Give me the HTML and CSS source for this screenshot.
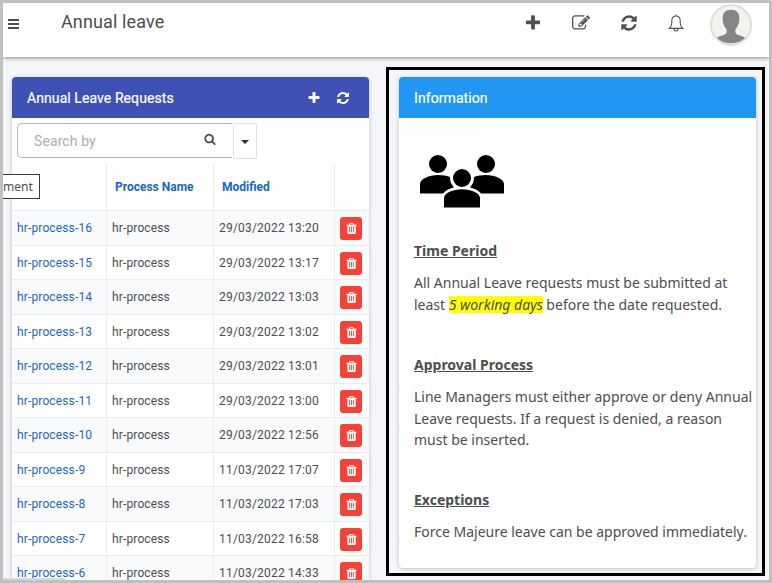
FILE: index.html
```html
<!DOCTYPE html>
<html lang="en">
<head>
<meta charset="utf-8">
<title>Annual leave</title>
<link rel="stylesheet" href="styles.css">
</head>
<body>
<svg class="defs" width="0" height="0">
  <symbol id="plus" viewBox="0 0 1792 1792"><path d="M1600 736v192q0 40-28 68t-68 28h-416v416q0 40-28 68t-68 28h-192q-40 0-68-28t-28-68v-416h-416q-40 0-68-28t-28-68v-192q0-40 28-68t68-28h416v-416q0-40 28-68t68-28h192q40 0 68 28t28 68v416h416q40 0 68 28t28 68z"/></symbol>
  <symbol id="refresh" viewBox="0 0 1792 1792"><path d="M1639 1056q0 5-1 7-64 268-268 434.5t-478 166.5q-146 0-282.5-55t-243.5-157l-129 129q-19 19-45 19t-45-19-19-45v-448q0-26 19-45t45-19h448q26 0 45 19t19 45-19 45l-137 137q71 66 161 102t187 36q134 0 250-65t186-179q11-17 53-117 8-23 30-23h192q13 0 22.5 9.500t9.500 22.500zm25-800v448q0 26-19 45t-45 19h-448q-26 0-45-19t-19-45 19-45l138-138q-148-137-349-137-134 0-250 65t-186 179q-11 17-53 117-8 23-30 23h-199q-13 0-22.500-9.500t-9.500-22.500v-7q65-268 270-434.500t480-166.500q146 0 284 55.500t245 156.500l130-129q19-19 45-19t45 19 19 45z"/></symbol>
  <symbol id="edit" viewBox="0 0 1792 1792"><path d="M888 1184l116-116-152-152-116 116v56h96v96h56zm440-720q-16-16-33 1l-350 350q-17 17-1 33t33-1l350-350q17-17 1-33zm80 594v190q0 119-84.500 203.500t-203.500 84.500h-832q-119 0-203.500-84.500t-84.500-203.500v-832q0-119 84.500-203.500t203.500-84.500h832q63 0 117 25 15 7 18 23 3 17-9 29l-49 49q-14 14-32 8-23-6-45-6h-832q-66 0-113 47t-47 113v832q0 66 47 113t113 47h832q66 0 113-47t47-113v-126q0-13 9-22l64-64q15-15 35-7t20 29zm-96-738l288 288-672 672h-288v-288zm444 132l-92 92-288-288 92-92q28-28 68-28t68 28l152 152q28 28 28 68t-28 68z"/></symbol>
  <symbol id="search" viewBox="0 0 1792 1792"><path d="M1216 832q0-185-131.500-316.500t-316.500-131.500-316.500 131.500-131.500 316.500 131.500 316.500 316.500 131.500 316.500-131.500 131.500-316.500zm512 832q0 52-38 90t-90 38q-54 0-90-38l-343-342q-179 124-399 124-143 0-273.500-55.500t-225-150-150-225-55.500-273.500 55.500-273.500 150-225 225-150 273.500-55.500 273.500 55.500 225 150 150 225 55.500 273.500q0 220-124 399l343 343q37 37 37 90z"/></symbol>
  <symbol id="trash" viewBox="0 0 1792 1792"><path d="M704 1376v-704q0-14-9-23t-23-9h-64q-14 0-23 9t-9 23v704q0 14 9 23t23 9h64q14 0 23-9t9-23zm256 0v-704q0-14-9-23t-23-9h-64q-14 0-23 9t-9 23v704q0 14 9 23t23 9h64q14 0 23-9t9-23zm256 0v-704q0-14-9-23t-23-9h-64q-14 0-23 9t-9 23v704q0 14 9 23t23 9h64q14 0 23-9t9-23zm-544-992h448l-48-117q-7-9-17-11h-317q-10 2-17 11zm928 32v64q0 14-9 23t-23 9h-96v948q0 83-47 143.500t-113 60.500h-832q-66 0-113-58.500t-47-141.500v-952h-96q-14 0-23-9t-9-23v-64q0-14 9-23t23-9h309l70-167q15-37 54-63t79-26h320q40 0 79 26t54 63l70 167h309q14 0 23 9t9 23z"/></symbol>
</svg>
<div class="app">
  <header class="topbar">
    <div class="menu"><i></i><i></i><i></i><i></i></div>
    <h1>Annual leave</h1>
    <nav class="actions">
      <svg class="action"><use href="#plus"/></svg>
      <svg class="action"><use href="#edit"/></svg>
      <svg class="action"><use href="#refresh"/></svg>
      <svg class="bell" viewBox="0 0 16 18"><path d="M8 .5v1.300M1.300 14.400h13.400c-1.700-1.600-2.500-3.300-2.500-5.400V6.500C12.200 3.700 10.500 2 8 2S3.800 3.700 3.800 6.500V9c0 2.100-.8 3.800-2.500 5.400zM6 14.600c0 3.200 4 3.200 4 0"/></svg>
    </nav>
    <svg class="avatar" viewBox="0 0 42 42">
      <circle cx="21" cy="21" r="20" fill="#f3f2ed" stroke="#dedede" stroke-width="2"/>
      <path fill="#858585" d="M21 5.700c5.500 0 8.500 3.400 8.400 8.500 0 4.800-1.500 8.500-4 11v3.300c.3 2.500 6.200 3 9.800 5.200C31.500 37.500 26.500 39.200 21 39.200S10.500 37.500 6.900 33.700c3.500-2.200 9.400-2.700 9.700-5.200v-3.300c-2.500-2.500-4-6.200-4-11 0-5.100 2.900-8.500 8.400-8.500z"/>
    </svg>
  </header>

  <main class="content">
    <section class="card requests">
      <div class="card-head">
        <h2>Annual Leave Requests</h2>
        <svg class="head-icon"><use href="#plus"/></svg>
        <svg class="head-icon"><use href="#refresh"/></svg>
      </div>
      <div class="search">
        <div class="field"><span>Search by</span><svg><use href="#search"/></svg></div>
        <div class="drop"><b></b></div>
      </div>
      <div class="row thead"><div></div><div>Process Name</div><div>Modified</div><div></div></div>
      <div class="row"><a>hr-process-16</a><div>hr-process</div><div>29/03/2022 13:20</div><div><span class="del"><svg><use href="#trash"/></svg></span></div></div>
      <div class="row"><a>hr-process-15</a><div>hr-process</div><div>29/03/2022 13:17</div><div><span class="del"><svg><use href="#trash"/></svg></span></div></div>
      <div class="row"><a>hr-process-14</a><div>hr-process</div><div>29/03/2022 13:03</div><div><span class="del"><svg><use href="#trash"/></svg></span></div></div>
      <div class="row"><a>hr-process-13</a><div>hr-process</div><div>29/03/2022 13:02</div><div><span class="del"><svg><use href="#trash"/></svg></span></div></div>
      <div class="row"><a>hr-process-12</a><div>hr-process</div><div>29/03/2022 13:01</div><div><span class="del"><svg><use href="#trash"/></svg></span></div></div>
      <div class="row"><a>hr-process-11</a><div>hr-process</div><div>29/03/2022 13:00</div><div><span class="del"><svg><use href="#trash"/></svg></span></div></div>
      <div class="row"><a>hr-process-10</a><div>hr-process</div><div>29/03/2022 12:56</div><div><span class="del"><svg><use href="#trash"/></svg></span></div></div>
      <div class="row"><a>hr-process-9</a><div>hr-process</div><div>11/03/2022 17:07</div><div><span class="del"><svg><use href="#trash"/></svg></span></div></div>
      <div class="row"><a>hr-process-8</a><div>hr-process</div><div>11/03/2022 17:03</div><div><span class="del"><svg><use href="#trash"/></svg></span></div></div>
      <div class="row"><a>hr-process-7</a><div>hr-process</div><div>11/03/2022 16:58</div><div><span class="del"><svg><use href="#trash"/></svg></span></div></div>
      <div class="row"><a>hr-process-6</a><div>hr-process</div><div>11/03/2022 14:33</div><div><span class="del"><svg><use href="#trash"/></svg></span></div></div>
    </section>

    <div class="frame">
      <section class="card info">
        <div class="card-head blue"><h2>Information</h2></div>
        <div class="info-body">
          <svg class="people" viewBox="0 0 84 53">
            <circle cx="18" cy="9" r="9"/><circle cx="66" cy="9" r="9"/>
            <path d="M0 38.500V29c0-5 9-9 18-9 4.500 0 9 .8 12.700 2.300L34 33l-10 5.500zM84 38.500V29c0-5-9-9-18-9-4.500 0-9 .8-12.700 2.300L50 33l10 5.500z"/>
            <circle cx="42" cy="23" r="12" fill="#fff"/>
            <path fill="#fff" d="M22 53V42c0-6 10-10.500 20-10.500S62 36 62 42v11z"/>
            <circle cx="42" cy="23" r="9"/>
            <path d="M24 52.500V43c0-5 9-8.700 18-8.700S60 38 60 43v9.500z"/>
          </svg>
          <h3 class="time">Time Period</h3>
          <p><span class="l1">All Annual Leave requests must be submitted at</span><br><span class="l2">least <em>5 working days</em> before the date requested.</span></p>
          <h3 class="approval">Approval Process</h3>
          <p><span class="l3">Line Managers must either approve or deny Annual</span><br><span class="l4">Leave requests. If a request is denied, a reason</span><br><span class="l5">must be inserted.</span></p>
          <h3 class="exceptions">Exceptions</h3>
          <p><span class="l6">Force Majeure leave can be approved immediately.</span></p>
        </div>
      </section>
    </div>
  </main>
  <div class="tip">ment</div>
  <div class="status"></div>
</div>
</body>
</html>
```
FILE: styles.css
```css
* { box-sizing: border-box; }
body { margin: 0; font-family: Roboto, "Liberation Sans", sans-serif; color: #4d4d4f; }
h1, h2, h3, p { margin: 0; font-weight: 400; }
svg { display: block; flex: none; }
.defs { position: absolute; }
.app {
  position: relative;
  width: 772px;
  height: 583px;
  overflow: hidden;
  border: 3px solid #c0c0c0;
  background: #f4f6fa;
}
.topbar {
  position: relative;
  display: flex;
  align-items: flex-start;
  height: 54px;
  background: #fff;
  box-shadow: 0 1px 4px rgba(0, 0, 0, .45);
}
.menu { display: flex; flex-direction: column; gap: 1px; width: 11px; margin: 16px 0 0 5px; }
.menu i { height: 2px; background: #505050; margin-bottom: 0; }
.menu { gap: 2px; }
.menu i:nth-child(4) { display: none; }
h1 { margin: 7px 0 0 42px; font-size: 18px; line-height: 24px; letter-spacing: .12px; white-space: nowrap; }
.actions { display: flex; align-items: center; gap: 30px; margin: 11px 26px 0 auto; fill: #505052; }
.action { width: 18px; height: 18px; }
.bell { width: 16px; height: 18px; fill: none; stroke: #505052; stroke-width: 1.100; }
.avatar { width: 42px; height: 42px; margin: 1px 17px 0 0; }

.content { display: flex; align-items: flex-start; }
.card { background: #fff; border-radius: 4px; box-shadow: 0 1px 4px rgba(0, 0, 0, .22); }
.requests { width: 357px; height: 530px; margin: 20px 17px 0 9px; }
.card-head {
  display: flex;
  align-items: center;
  height: 41px;
  padding: 0 19px 0 15px;
  background: #3f51b5;
  border-radius: 4px 4px 0 0;
  color: #fff;
}
.card-head h2 { flex: 1; font-size: 14px; line-height: 20px; letter-spacing: .08px; -webkit-text-stroke: .2px #fff; }
.head-icon { width: 14px; height: 14px; margin-left: 15px; fill: #fff; }
.blue { background: #2196f3; }

.search { display: flex; padding: 5px 5px 0; height: 46px; }
.field {
  display: flex;
  align-items: center;
  width: 215px;
  height: 35px;
  padding: 0 16px;
  border: 1px solid #b5b5b5;
  border-right: 0;
  border-radius: 5px 0 0 5px;
  font-size: 14px;
  color: #a9adb5;
}
.field span { flex: 1; letter-spacing: .1px; }
.field svg { width: 12px; height: 12px; margin-top: -3px; fill: #484848; }
.drop {
  display: flex;
  align-items: center;
  justify-content: center;
  width: 24px;
  height: 36px;
  margin-left: 1px;
  border: 1px solid #dbe3e6;
  border-radius: 2px;
}
.drop b { margin-top: 2px; border: 4px solid transparent; border-top-color: #303030; border-bottom: 0; }

.row {
  display: grid;
  grid-template-columns: 95px 107px 121px 34px;
  height: 34.500px;
  border-bottom: 1px solid #e9ecee;
  font-size: 12px;
  line-height: 34px;
}
.row:nth-child(even) { background: #f9fafb; }
.row > * { padding-left: 5px; border-right: 1px solid #e9ecee; white-space: nowrap; letter-spacing: .14px; }
.row > :last-child { border-right: 0; }
.row a { color: #1b66c4; }
.row > :nth-child(3) { letter-spacing: .2px; }
.row.thead { height: 47px; line-height: 46px; background: #fff; font-weight: 700; color: #1766c5; }
.row.thead > * { padding-left: 8px; letter-spacing: 0; }
.del {
  display: flex;
  align-items: center;
  justify-content: center;
  width: 22px;
  height: 23px;
  margin-top: 6px;
  border-radius: 3px;
  background: #f44336;
}
.del svg { width: 13px; height: 13px; fill: #fff; }

.frame { width: 379px; height: 509px; margin-top: 10px; padding: 7px 6px 0 10px; border: 3px solid #000; }
.info { width: 357px; height: 491px; }
.info-body { padding: 37px 15px 0; font-family: "DejaVu Sans Condensed", "Noto Sans", sans-serif; font-size: 14px; line-height: 21.500px; }
.people { width: 84px; height: 53px; margin-left: 6px; }
h3 { width: fit-content; font-family: "Noto Sans", sans-serif; font-size: 14px; line-height: 20px; font-weight: 700; text-decoration: underline; margin-bottom: 11px; white-space: nowrap; }
.info-body p { font-family: "Noto Sans", sans-serif; white-space: nowrap; }
.time { margin-top: 33px; }
.approval { margin-top: 40px; }
.exceptions { margin-top: 39px; }
em { background: #ff0; line-height: 17px; display: inline-block; }
.tip {
  position: absolute;
  left: 0;
  top: 171px;
  width: 37px;
  height: 25px;
  border: 1px solid #3a3a3e;
  border-left: 0;
  background: #fff;
  font: 12px/23px "Noto Sans", sans-serif;
}
.status { position: absolute; left: 0; bottom: 0; width: 63px; height: 2px; border-radius: 0 3px 0 0; background: #d7d9dc; }
```
